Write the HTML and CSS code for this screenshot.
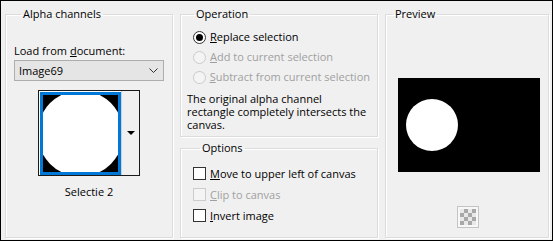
FILE: index.html
```html
<!DOCTYPE html>
<html lang="en">
<head>
    <meta charset="UTF-8">
    <title>Load Selection From Alpha Channel</title>
    <link rel="stylesheet" href="styles.css">
</head>
<body>
    <div class="window">
        <fieldset class="group group-alpha">
            <legend>Alpha channels</legend>
            <div class="field-label">Load from <u>d</u>ocument:</div>
            <div class="select">
                <span>Image69</span>
                <svg class="chevron" width="9" height="6" viewBox="0 0 9 6"><path d="M0.5 0.5 L4.5 4.5 L8.5 0.5" fill="none" stroke="#333" stroke-width="1"/></svg>
            </div>
            <div class="picker">
                <div class="thumb">
                    <svg width="75" height="77" viewBox="0 0 75 77">
                        <rect width="75" height="77" fill="#000"/>
                        <circle cx="37.5" cy="38.5" r="43" fill="#fff"/>
                    </svg>
                </div>
                <div class="picker-drop"><span class="tri"></span></div>
            </div>
            <div class="thumb-name">Selectie 2</div>
        </fieldset>

        <div class="column">
            <fieldset class="group group-operation">
                <legend>Operation</legend>
                <div class="option"><span class="radio checked"></span><span><u>R</u>eplace selection</span></div>
                <div class="option disabled"><span class="radio"></span><span><u>A</u>dd to current selection</span></div>
                <div class="option disabled"><span class="radio"></span><span><u>S</u>ubtract from current selection</span></div>
                <p class="note">The original alpha channel rectangle completely intersects the canvas.</p>
            </fieldset>

            <fieldset class="group group-options">
                <legend>Options</legend>
                <div class="option check-row"><span class="check"></span><span><u>M</u>ove to upper left of canvas</span></div>
                <div class="option check-row disabled"><span class="check"></span><span><u>C</u>lip to canvas</span></div>
                <div class="option check-row"><span class="check"></span><span><u>I</u>nvert image</span></div>
            </fieldset>
        </div>

        <fieldset class="group group-preview">
            <legend>Preview</legend>
            <svg class="preview" width="142" height="94" viewBox="0 0 142 94">
                <rect width="142" height="94" fill="#000"/>
                <circle cx="34" cy="47" r="26" fill="#fff"/>
            </svg>
            <div class="checker"><span></span></div>
        </fieldset>
    </div>
</body>
</html>
```

FILE: styles.css
```css
body {
    margin: 0;
    font-family: "Open Sans", "Noto Sans", sans-serif;
    font-size: 11px;
    line-height: 14px;
    color: #000;
}

.window {
    width: 553px;
    height: 241px;
    box-sizing: border-box;
    border: 1px solid #000;
    background: #f0f0f0;
    display: flex;
    gap: 7px;
    padding: 6px 3px 2px 4px;
}

.group {
    margin: 0;
    padding: 0;
    min-width: 0;
    box-sizing: border-box;
    border: 1px solid #dcdcdc;
    box-shadow: inset 1px 1px 0 #fff, 1px 1px 0 #fff;
}

.group legend {
    margin-left: 7px;
    padding: 0 2px;
    line-height: 14px;
}

.group-alpha {
    width: 168px;
    padding: 0 8px;
}

.field-label {
    margin-top: 23px;
}

.select {
    margin-top: 2px;
    height: 21px;
    box-sizing: border-box;
    border: 1px solid #adadad;
    background: #e5e5e5;
    display: flex;
    align-items: center;
    justify-content: space-between;
    padding: 0 5px 0 4px;
}

.picker {
    margin: 9px auto 0;
    width: 102px;
    height: 86px;
    box-sizing: border-box;
    border: 1px solid #1a1a1a;
    background: #fff;
    display: flex;
    padding: 1px 0 0 1px;
}

.thumb {
    width: 81px;
    height: 83px;
    box-sizing: border-box;
    border: 3px solid #0078d7;
    background: #000;
}

.thumb svg {
    display: block;
}

.picker-drop {
    flex: 1;
    margin-top: -1px;
    background: #f0f0f0;
    border-left: 1px solid #d0d0d0;
    display: flex;
    align-items: center;
    justify-content: center;
}

.tri {
    width: 0;
    height: 0;
    border-left: 4px solid transparent;
    border-right: 4px solid transparent;
    border-top: 4px solid #000;
}

.thumb-name {
    margin-top: 9px;
    text-align: center;
}

.column {
    width: 198px;
    display: flex;
    flex-direction: column;
    gap: 4px;
}

.group-operation {
    height: 130px;
    padding: 6px 7px 0 6px;
}

.group-options {
    flex: 1;
    padding: 8px 7px 0 12px;
}

.option {
    height: 20px;
    display: flex;
    align-items: center;
    gap: 4px;
    white-space: nowrap;
}

.group-operation .option {
    padding-left: 6px;
}

.check-row {
    height: 21px;
}

.disabled {
    color: #a0a0a0;
}

.radio {
    width: 13px;
    height: 13px;
    box-sizing: border-box;
    border-radius: 50%;
    border: 1px solid #333;
    background: #fff;
    display: flex;
    align-items: center;
    justify-content: center;
}

.radio.checked::after {
    content: "";
    width: 7px;
    height: 7px;
    border-radius: 50%;
    background: #000;
}

.disabled .radio,
.disabled .check {
    border-color: #cccccc;
    background: #f4f4f4;
}

.check {
    width: 13px;
    height: 13px;
    box-sizing: border-box;
    border: 1px solid #333;
    background: #fff;
}

.note {
    margin: 5px 0 0;
    line-height: 13px;
}

.group-preview {
    width: 164px;
    padding: 0;
}

.preview {
    display: block;
    margin: 57px 0 0 12px;
}

.checker {
    margin: 34px 0 0 71px;
    width: 22px;
    height: 22px;
    box-sizing: border-box;
    border: 1px solid #c4c4c4;
    padding: 2px;
    background: #f7f7f7;
}

.checker span {
    display: block;
    width: 16px;
    height: 16px;
    background: conic-gradient(#a8a8a8 25%, #e8e8e8 0 50%, #a8a8a8 0 75%, #e8e8e8 0);
    background-size: 8px 8px;
}
```
